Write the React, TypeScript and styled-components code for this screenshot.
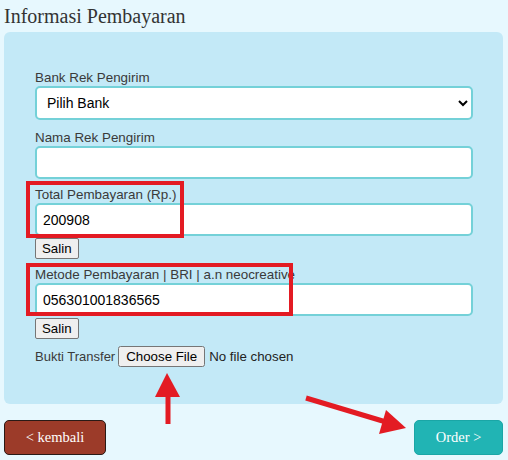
import React from 'react';
import styled, { createGlobalStyle } from 'styled-components';

const GlobalStyle = createGlobalStyle`
  html, body {
    margin: 0;
    padding: 0;
    background: #e7f8fe;
  }
  body {
    font-family: 'Liberation Sans', Arial, sans-serif;
  }
`;

const Page = styled.div`
  position: relative;
  width: 508px;
  height: 460px;
  box-sizing: border-box;
  padding: 0 5px 0 4px;
  overflow: hidden;
`;

const Title = styled.h3`
  margin: 0;
  padding: 4px 0 0 0;
  height: 32px;
  box-sizing: border-box;
  font-family: 'Liberation Serif', 'Times New Roman', serif;
  font-weight: normal;
  font-size: 20px;
  line-height: 24px;
  color: #333333;
`;

const Panel = styled.div`
  background: #c3e9f7;
  border-radius: 6px;
  height: 372px;
  box-sizing: border-box;
  padding: 38px 30px 0 31px;
`;

const Field = styled.div<{ $gap?: number }>`
  display: flex;
  flex-direction: column;
  margin-bottom: ${(p) => p.$gap ?? 9}px;
`;

const Label = styled.label`
  font-size: 13.4px;
  line-height: 16px;
  color: #3a3a3a;
`;

const Select = styled.select`
  height: 34px;
  box-sizing: border-box;
  border: 2px solid #74d1d8;
  border-radius: 5px;
  background: #ffffff;
  padding: 0 6px;
  font-family: 'Liberation Sans', Arial, sans-serif;
  font-size: 14px;
  color: #000;
  outline: none;
`;

const TextInput = styled.input<{ $h?: number }>`
  height: ${(p) => p.$h ?? 33}px;
  box-sizing: border-box;
  border: 2px solid #74d1d8;
  border-radius: 5px;
  background: #ffffff;
  padding: 0 6px;
  font-family: 'Liberation Sans', Arial, sans-serif;
  font-size: 14px;
  color: #000;
  outline: none;
`;

const CopyButton = styled.button`
  align-self: flex-start;
  margin-top: 2px;
  height: 21px;
  padding: 0 6px;
  background: #efefef;
  border: 1px solid #767676;
  border-radius: 2px;
  font-family: 'Liberation Sans', Arial, sans-serif;
  font-size: 13.3px;
  color: #000;
`;

const FileRow = styled.div`
  display: flex;
  align-items: center;
  gap: 3px;
  margin-top: 7px;
  font-size: 13px;
  color: #3a3a3a;
`;

const FileInput = styled.input`
  font-family: 'Liberation Sans', Arial, sans-serif;
  font-size: 13.3px;
  color: #222;
`;

const Footer = styled.div`
  display: flex;
  justify-content: space-between;
  margin-top: 16px;
`;

const NavButton = styled.button<{ $tone: 'back' | 'next' }>`
  height: 35px;
  width: ${(p) => (p.$tone === 'back' ? 102 : 89)}px;
  border-radius: 5px;
  border: 1px solid ${(p) => (p.$tone === 'back' ? '#2a1a16' : '#1aa6a6')};
  background: ${(p) => (p.$tone === 'back' ? '#9c3b29' : '#21b4b4')};
  color: #ffffff;
  font-family: 'Liberation Serif', 'Times New Roman', serif;
  font-size: 14.5px;
`;

const Overlay = styled.svg`
  position: absolute;
  left: 0;
  top: 0;
  pointer-events: none;
`;

function Annotations() {
  const red = '#e31b23';
  return (
    <Overlay width="508" height="460" viewBox="0 0 508 460">
      <rect x="28" y="183" width="154" height="53" fill="none" stroke={red} strokeWidth="4" />
      <rect x="28" y="265" width="263" height="49" fill="none" stroke={red} strokeWidth="4" />
      <line x1="168" y1="424" x2="168" y2="394" stroke={red} strokeWidth="5" />
      <polygon points="167,373 155,397 180,397" fill={red} />
      <line x1="306" y1="398" x2="386" y2="422" stroke={red} strokeWidth="5" />
      <polygon points="406,428 386,410 379,434" fill={red} />
    </Overlay>
  );
}

function App() {
  return (
    <>
      <GlobalStyle />
      <Page>
        <Title>Informasi Pembayaran</Title>
        <Panel>
          <Field $gap={10}>
            <Label>Bank Rek Pengirim</Label>
            <Select defaultValue="">
              <option value="">Pilih Bank</option>
              <option value="bri">BRI</option>
              <option value="bca">BCA</option>
            </Select>
          </Field>
          <Field $gap={8}>
            <Label>Nama Rek Pengirim</Label>
            <TextInput type="text" />
          </Field>
          <Field $gap={8}>
            <Label>Total Pembayaran (Rp.)</Label>
            <TextInput type="text" defaultValue="200908" />
            <CopyButton>Salin</CopyButton>
          </Field>
          <Field $gap={0}>
            <Label>Metode Pembayaran | BRI | a.n neocreative</Label>
            <TextInput type="text" defaultValue="056301001836565" />
            <CopyButton>Salin</CopyButton>
          </Field>
          <FileRow>
            <span>Bukti Transfer</span>
            <FileInput type="file" />
          </FileRow>
        </Panel>
        <Footer>
          <NavButton $tone="back">&lt; kembali</NavButton>
          <NavButton $tone="next">Order &gt;</NavButton>
        </Footer>
        <Annotations />
      </Page>
    </>
  );
}

export default App;
